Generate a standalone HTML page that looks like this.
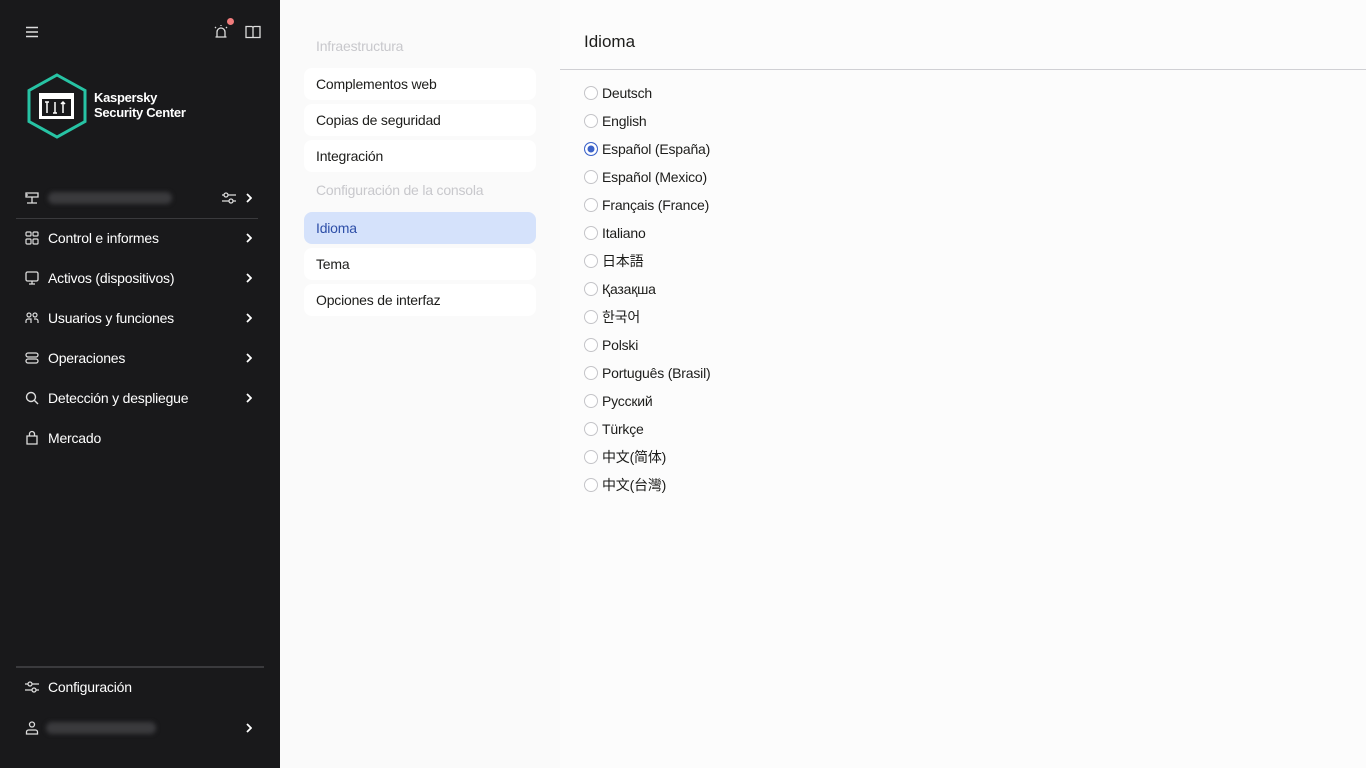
<!DOCTYPE html>
<html><head><meta charset="utf-8"><style>
*{margin:0;padding:0;box-sizing:border-box}
body{width:1366px;height:768px;overflow:hidden;font-family:"Liberation Sans","Noto Sans CJK JP",sans-serif;background:#fcfcfc;position:relative;color:#1d1d1b}
#sb{position:absolute;left:0;top:0;width:280px;height:768px;background:#19191b;color:#fff}
.ab{position:absolute}
.mi{position:absolute;left:24px;width:236px;height:20px;font-size:14px;line-height:20px;letter-spacing:-0.2px}
.mi svg{position:absolute;left:0;top:2px}
.mi span{position:absolute;left:24px;white-space:nowrap}
.mi svg.chev{left:auto;right:8px;top:5px}
.blur{position:absolute;height:12px;background:#3a3a3d;border-radius:6px;filter:blur(2px)}
#mid{position:absolute;left:280px;top:0;width:280px;height:768px;background:#fafafa}
.it{position:absolute;left:24px;width:232px;height:32px;background:#fff;border-radius:8px;font-size:14px;line-height:32px;padding-left:12px;letter-spacing:-0.2px}
.hd{position:absolute;left:36px;font-size:14px;color:#c8c8cc;letter-spacing:-0.2px}
.r{position:absolute;left:584px;font-size:14px;height:20px;line-height:20px;letter-spacing:-0.2px}
.r i{position:absolute;left:0;top:3px;width:14px;height:14px;border:1px solid #c4c4c8;border-radius:50%;background:#fff}
.r span{position:absolute;left:18px;white-space:nowrap}
</style></head><body>
<div id="sb">
<svg class="ab" style="left:25px;top:25px" width="14" height="14" viewBox="0 0 14 14" stroke="#ddd" stroke-width="1.5"><path d="M1 2.5h12M1 7h12M1 11.5h12"/></svg>
<svg class="ab" style="left:213px;top:24px" width="16" height="16" viewBox="0 0 16 16" fill="none" stroke="#ddd" stroke-width="1.3"><path d="M4 13V8a4 4 0 0 1 8 0v5M2.5 13h11M8 2V1M3 4 2 3M13 4l1-1"/></svg>
<div class="ab" style="left:227px;top:18px;width:7px;height:7px;border-radius:50%;background:#f07c7c"></div>
<svg class="ab" style="left:245px;top:25px" width="16" height="14" viewBox="0 0 16 14" fill="none" stroke="#ddd" stroke-width="1.3"><path d="M1 1.5h5.5a1.5 1.5 0 0 1 1.5 1.5v9.5H1zM15 1.5H9.5A1.5 1.5 0 0 0 8 3v9.5h7z"/></svg>
<svg class="ab" style="left:26px;top:73px" width="62" height="66" viewBox="0 0 62 66"><path d="M31 2 59 17.5v31L31 64 3 48.5v-31z" fill="none" stroke="#27c3a4" stroke-width="3"/><rect x="13" y="20" width="35" height="26" fill="#fff"/><rect x="16" y="26" width="29" height="17" fill="#19191b"/><path d="M21 29v11M19 29h4M29 29v11M27 40h4M37 29v11M35 31l2-2 2 2" stroke="#fff" stroke-width="1.5" fill="none"/></svg>
<div class="ab" style="left:94px;top:90px;font-size:13px;font-weight:bold;line-height:15px;letter-spacing:-0.3px">Kaspersky<br>Security Center</div>
<div class="mi" style="top:188px"><svg width="16" height="16" viewBox="0 0 16 16" fill="none" stroke="#ddd" stroke-width="1.3"><path d="M2 3h12v4H2zM8 7v6M3 13h10M2 5h2"/></svg><div class="blur" style="left:24px;top:4px;width:124px"></div><svg style="left:197px" width="16" height="16" viewBox="0 0 16 16" fill="none" stroke="#ddd" stroke-width="1.3"><path d="M1 5h14M1 11h14"/><circle cx="5" cy="5" r="2" fill="#19191b"/><circle cx="10" cy="11" r="2" fill="#19191b"/></svg><svg class="chev" width="6" height="10" viewBox="0 0 6 10"><path d="M1 1l4 4-4 4" stroke="#fff" stroke-width="1.8" fill="none"/></svg></div>
<div class="ab" style="left:16px;top:218px;width:242px;height:1px;background:#3a3a3d"></div>
<div class="mi" style="top:228px"><svg width="16" height="16" viewBox="0 0 16 16" fill="none" stroke="#ddd" stroke-width="1.2"><rect x="2" y="2" width="5" height="4" rx="1"/><rect x="9" y="2" width="5" height="4" rx="1"/><rect x="2" y="9" width="5" height="5" rx="1"/><rect x="9" y="9" width="5" height="5" rx="1"/></svg><span>Control e informes</span><svg class="chev" width="6" height="10" viewBox="0 0 6 10"><path d="M1 1l4 4-4 4" stroke="#fff" stroke-width="1.8" fill="none"/></svg></div>
<div class="mi" style="top:268px"><svg width="16" height="16" viewBox="0 0 16 16" fill="none" stroke="#ddd" stroke-width="1.3"><rect x="2" y="2" width="12" height="9" rx="1.5"/><path d="M8 11v3M5 14h6"/></svg><span>Activos (dispositivos)</span><svg class="chev" width="6" height="10" viewBox="0 0 6 10"><path d="M1 1l4 4-4 4" stroke="#fff" stroke-width="1.8" fill="none"/></svg></div>
<div class="mi" style="top:308px"><svg width="16" height="16" viewBox="0 0 16 16" fill="none" stroke="#ddd" stroke-width="1.2"><circle cx="5" cy="5" r="2"/><circle cx="11" cy="5" r="2"/><path d="M2 13v-2a2 2 0 0 1 2-2h3v4M14 13v-2a2 2 0 0 0-2-2h-2"/></svg><span>Usuarios y funciones</span><svg class="chev" width="6" height="10" viewBox="0 0 6 10"><path d="M1 1l4 4-4 4" stroke="#fff" stroke-width="1.8" fill="none"/></svg></div>
<div class="mi" style="top:348px"><svg width="16" height="16" viewBox="0 0 16 16" fill="none" stroke="#ddd" stroke-width="1.3"><rect x="2" y="3" width="12" height="4" rx="2"/><rect x="2" y="9" width="12" height="4" rx="2"/></svg><span>Operaciones</span><svg class="chev" width="6" height="10" viewBox="0 0 6 10"><path d="M1 1l4 4-4 4" stroke="#fff" stroke-width="1.8" fill="none"/></svg></div>
<div class="mi" style="top:388px"><svg width="16" height="16" viewBox="0 0 16 16" fill="none" stroke="#ddd" stroke-width="1.4"><circle cx="7" cy="7" r="4.5"/><path d="M10.5 10.5 14 14"/></svg><span>Detección y despliegue</span><svg class="chev" width="6" height="10" viewBox="0 0 6 10"><path d="M1 1l4 4-4 4" stroke="#fff" stroke-width="1.8" fill="none"/></svg></div>
<div class="mi" style="top:428px"><svg width="16" height="16" viewBox="0 0 16 16" fill="none" stroke="#ddd" stroke-width="1.3"><path d="M3 6h10v8H3zM5.5 6V4a2.5 2.5 0 0 1 5 0v2"/></svg><span>Mercado</span></div>
<div class="ab" style="left:16px;top:666px;width:248px;height:2px;background:#3a3a3d"></div>
<div class="mi" style="top:677px"><svg width="16" height="16" viewBox="0 0 16 16" fill="none" stroke="#ddd" stroke-width="1.3"><path d="M1 5h14M1 11h14"/><circle cx="6" cy="5" r="2" fill="#19191b"/><circle cx="10" cy="11" r="2" fill="#19191b"/></svg><span>Configuración</span></div>
<div class="mi" style="top:718px"><svg width="16" height="16" viewBox="0 0 16 16" fill="none" stroke="#ddd" stroke-width="1.3"><circle cx="8" cy="4.5" r="2.5"/><path d="M2.5 14v-2a2 2 0 0 1 2-2h7a2 2 0 0 1 2 2v2z"/></svg><div class="blur" style="left:22px;top:4px;width:110px"></div><svg class="chev" width="6" height="10" viewBox="0 0 6 10"><path d="M1 1l4 4-4 4" stroke="#fff" stroke-width="1.8" fill="none"/></svg></div>
</div>
<div id="mid">
<div class="hd" style="top:38px">Infraestructura</div>
<div class="it" style="top:68px">Complementos web</div>
<div class="it" style="top:104px">Copias de seguridad</div>
<div class="it" style="top:140px">Integración</div>
<div class="hd" style="top:182px">Configuración de la consola</div>
<div class="it" style="top:212px;background:#d5e2fb;color:#2e4fa8">Idioma</div>
<div class="it" style="top:248px">Tema</div>
<div class="it" style="top:284px">Opciones de interfaz</div>
</div>
<div class="ab" style="left:584px;top:32px;font-size:17px">Idioma</div>
<div class="ab" style="left:560px;top:69px;width:806px;height:1px;background:#d0d0d4"></div>
<div class="r" style="top:83px"><i></i><span>Deutsch</span></div>
<div class="r" style="top:111px"><i></i><span>English</span></div>
<div class="r" style="top:139px"><i style="border-color:#3c63c9;box-shadow:inset 0 0 0 2.5px #fff;background:#3c63c9"></i><span>Español (España)</span></div>
<div class="r" style="top:167px"><i></i><span>Español (Mexico)</span></div>
<div class="r" style="top:195px"><i></i><span>Français (France)</span></div>
<div class="r" style="top:223px"><i></i><span>Italiano</span></div>
<div class="r" style="top:251px"><i></i><span>日本語</span></div>
<div class="r" style="top:279px"><i></i><span>Қазақша</span></div>
<div class="r" style="top:307px"><i></i><span style="font-family:'Noto Sans CJK KR',sans-serif">한국어</span></div>
<div class="r" style="top:335px"><i></i><span>Polski</span></div>
<div class="r" style="top:363px"><i></i><span>Português (Brasil)</span></div>
<div class="r" style="top:391px"><i></i><span>Русский</span></div>
<div class="r" style="top:419px"><i></i><span>Türkçe</span></div>
<div class="r" style="top:447px"><i></i><span>中文(简体)</span></div>
<div class="r" style="top:475px"><i></i><span style="font-family:'Liberation Sans','Noto Sans CJK TC',sans-serif">中文(台灣)</span></div>
</body></html>
